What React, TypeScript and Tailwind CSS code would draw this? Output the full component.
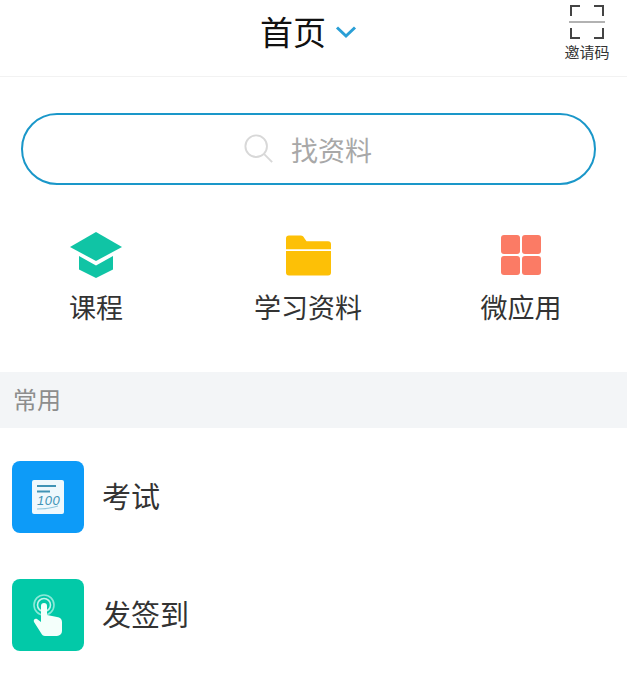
const cjk = "font-['Noto_Sans_CJK_SC','Liberation_Sans',sans-serif]";

function ScanIcon() {
  return (
    <svg width="36" height="36" viewBox="0 0 36 36" fill="none" stroke="#444" strokeWidth="2">
      <path d="M2 12V2h9M25 2h9v10M2 24v10h9M25 34h9V24" />
      <path d="M0 18h36" strokeWidth="1.2" stroke="#666" />
    </svg>
  );
}

function CapIcon() {
  return (
    <svg width="52" height="46" viewBox="0 0 52 46">
      <path d="M26 0 52 15 26 29 0 15Z" fill="#10c4a5" />
      <path d="M9 24l17 9.5L43 24v13.5L26 46 9 37.5Z" fill="#10c4a5" />
    </svg>
  );
}

function FolderIcon() {
  return (
    <svg width="45" height="41" viewBox="0 0 46 41">
      <path d="M0 3a3 3 0 0 1 3-3h12c2 0 3 1 4 3l2 3h22a3 3 0 0 1 3 3v5H0Z" fill="#fdc006" />
      <path d="M0 16h46v22a3 3 0 0 1-3 3H3a3 3 0 0 1-3-3Z" fill="#fdc006" />
    </svg>
  );
}

function GridIcon() {
  return (
    <div className="grid grid-cols-2 gap-[2px] w-[40px] h-[40px]">
      <div className="bg-[#fb7b65] rounded-[3px]" />
      <div className="bg-[#fb7b65] rounded-[3px]" />
      <div className="bg-[#fb7b65] rounded-[3px]" />
      <div className="bg-[#fb7b65] rounded-[3px]" />
    </div>
  );
}

function ExamIcon() {
  return (
    <svg width="32" height="34" viewBox="0 0 32 34">
      <rect width="32" height="34" rx="2" fill="#eef8fd" />
      <path d="M5 6h19M5 11.5h13" stroke="#3f93b5" strokeWidth="1.8" />
      <text x="5" y="25" fontSize="13" fontStyle="italic" fontFamily="'Liberation Sans', sans-serif" fill="#3f93b5" letterSpacing="0.5">100</text>
      <path d="M5 29c7 0 15-1 21-3" stroke="#8fc6dc" strokeWidth="1.2" fill="none" />
    </svg>
  );
}

function TapIcon() {
  return (
    <svg width="30" height="44" viewBox="0 0 30 44" fill="none">
      <circle cx="11" cy="12" r="10" stroke="#8ce9d8" strokeWidth="1.6" />
      <circle cx="11" cy="12" r="6.5" stroke="#c4f5ec" strokeWidth="1.6" />
      <path d="M8 13a3 3 0 0 1 6 0v9l10 2c3 .6 5 2 5 5v9a5 5 0 0 1-5 5H12c-2 0-3-1-4-3L1 29c-1-2 1-4 3-3l4 3Z" fill="#f4fffb" />
    </svg>
  );
}

const entries = [
  { label: '课程', icon: <CapIcon /> },
  { label: '学习资料', icon: <FolderIcon /> },
  { label: '微应用', icon: <GridIcon /> },
];

export default function App() {
  return (
    <div className={`w-[627px] h-[677px] overflow-hidden bg-white ${cjk}`}>
      <header className="h-[77px] border-b border-[#f2f2f2] flex pt-[15px] justify-center relative">
        <div className="flex h-[33px] items-center gap-[9px] mr-[10px]">
          <span className="text-[33px] leading-none text-[#111]">首页</span>
          <svg width="22" height="14" viewBox="0 0 22 14" fill="none" stroke="#2a9fd6" strokeWidth="3">
            <path d="M2 2.5 11 11l9-8.5" />
          </svg>
        </div>
        <div className="absolute right-[17px] top-[4px] flex flex-col items-center w-[46px]">
          <ScanIcon />
          <span className="text-[15px] leading-none mt-[4px] text-[#333] whitespace-nowrap">邀请码</span>
        </div>
      </header>

      <div className="pl-[21px] pr-[31px] pt-[36px]">
        <div className="h-[72px] rounded-[36px] border-2 border-[#1a97c9] flex items-center justify-center gap-[17px] pr-[1px]">
          <svg width="30" height="30" viewBox="0 0 32 32" fill="none" stroke="#d8d8d8" strokeWidth="2">
            <circle cx="13" cy="13" r="11.5" />
            <path d="M21.5 21.5 30 30" />
          </svg>
          <span className="text-[27px] leading-none text-[#a8a8a8]">找资料</span>
        </div>
      </div>

      <div className="grid grid-cols-[192px_232px_194px] pt-[47px]">
        {entries.map(e => (
          <div key={e.label} className="flex flex-col items-center">
            <div className="h-[46px] flex items-center justify-center">{e.icon}</div>
            <span className="text-[27px] leading-none mt-[15px] text-[#333] whitespace-nowrap">{e.label}</span>
          </div>
        ))}
      </div>

      <div className="mt-[52px] h-[56px] bg-[#f3f5f7] flex items-center pl-[13px] pb-[2px]">
        <span className="text-[24px] leading-none text-[#8d8d8d]">常用</span>
      </div>

      <div className="pl-[12px] pt-[33px] flex flex-col gap-[46px]">
        <div className="flex items-center gap-[18px]">
          <div className="w-[72px] h-[72px] rounded-[8px] bg-[#0d9bf8] flex items-center justify-center">
            <ExamIcon />
          </div>
          <span className="text-[29px] leading-none text-[#333] pb-[3px]">考试</span>
        </div>
        <div className="flex items-center gap-[18px]">
          <div className="w-[72px] h-[72px] rounded-[8px] bg-[#02c9a8] flex items-center justify-center">
            <TapIcon />
          </div>
          <span className="text-[29px] leading-none text-[#333] pb-[3px]">发签到</span>
        </div>
      </div>
    </div>
  );
}
